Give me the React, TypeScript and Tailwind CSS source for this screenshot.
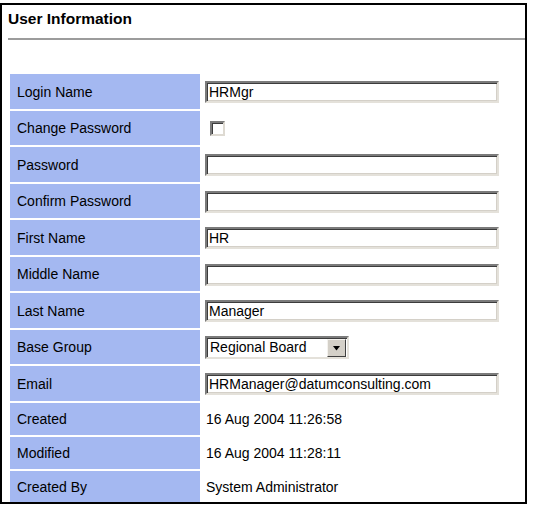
import React from "react";

type Row = {
  label: string;
  h: string;
  kind: "input" | "check" | "select" | "text";
  value?: string;
};

const rows: Row[] = [
  { label: "Login Name", h: "h-[35px]", kind: "input", value: "HRMgr" },
  { label: "Change Password", h: "h-[34px]", kind: "check" },
  { label: "Password", h: "h-[35px]", kind: "input", value: "" },
  { label: "Confirm Password", h: "h-[34px]", kind: "input", value: "" },
  { label: "First Name", h: "h-[35px]", kind: "input", value: "HR" },
  { label: "Middle Name", h: "h-[34px]", kind: "input", value: "" },
  { label: "Last Name", h: "h-[35px]", kind: "input", value: "Manager" },
  { label: "Base Group", h: "h-[34px]", kind: "select", value: "Regional Board" },
  { label: "Email", h: "h-[35px]", kind: "input", value: "HRManager@datumconsulting.com" },
  { label: "Created", h: "h-[32px]", kind: "text", value: "16 Aug 2004 11:26:58" },
  { label: "Modified", h: "h-[32px]", kind: "text", value: "16 Aug 2004 11:28:11" },
  { label: "Created By", h: "h-[31px]", kind: "text", value: "System Administrator" },
];

function TextBox({ value }: { value: string }) {
  return (
    <div className="w-[294px] h-[22px] border-2 border-t-[#7b7b7b] border-l-[#7b7b7b] border-b-[#e4e1da] border-r-[#e4e1da] shadow-[inset_1px_1px_0_#3c3c3c,inset_-1px_-1px_0_#d4d0c8] bg-white pl-[2px] leading-[18px] text-black">
      {value}
    </div>
  );
}

function CheckBox() {
  return (
    <span className="block shrink-0 ml-[5px] w-[15px] h-[15px] border-2 border-t-[#7b7b7b] border-l-[#7b7b7b] border-b-[#dedad2] border-r-[#dedad2] shadow-[inset_1px_1px_0_#3c3c3c] bg-white" />
  );
}

function SelectBox({ value }: { value: string }) {
  return (
    <div className="flex w-[144px] h-[23px] border-2 border-t-[#7b7b7b] border-l-[#7b7b7b] border-b-[#e4e1da] border-r-[#e4e1da] shadow-[inset_1px_1px_0_#3c3c3c] bg-white">
      <span className="flex-1 pl-[3px] leading-[19px] text-black">{value}</span>
      <span className="flex items-center justify-center w-[19px] h-[18px] mt-[1px] mr-[1px] bg-[#d4d0c8] border border-t-[#f4f2ee] border-l-[#f4f2ee] border-b-[#404040] border-r-[#404040]">
        <svg width="9" height="5" viewBox="0 0 9 5" aria-hidden>
          <path d="M1 0h7L4.5 4.5z" fill="#000" />
        </svg>
      </span>
    </div>
  );
}

export default function App() {
  return (
    <div className="w-[534px] h-[505px] bg-white pt-[3px]">
      <div className="w-[527px] h-[501px] border-2 border-black bg-white font-['Liberation_Sans',Arial,sans-serif] text-[14px] text-black overflow-hidden">
        {/* Header */}
        <div className="h-[33px] pl-[6px] pt-[5px] leading-[18px] text-[15.5px] font-bold">
          User Information
        </div>
        <div className="ml-[6px] border-t-2 border-[#9c9c9c]" />

        {/* Form rows */}
        <div className="mt-[34px] pl-[8px] flex flex-col gap-[2px]">
          {rows.map((r) => (
            <div key={r.label} className={`flex ${r.h}`}>
              <div className="w-[190px] bg-[#a4b8f1] flex items-center pl-[7px] pt-[1px]">
                {r.label}
              </div>
              <div className="flex-1 flex items-center pl-[5px] pt-[1px]">
                {r.kind === "input" && <TextBox value={r.value ?? ""} />}
                {r.kind === "check" && <CheckBox />}
                {r.kind === "select" && <SelectBox value={r.value ?? ""} />}
                {r.kind === "text" && <span className="pl-[1px]">{r.value}</span>}
              </div>
            </div>
          ))}
        </div>
      </div>
    </div>
  );
}
